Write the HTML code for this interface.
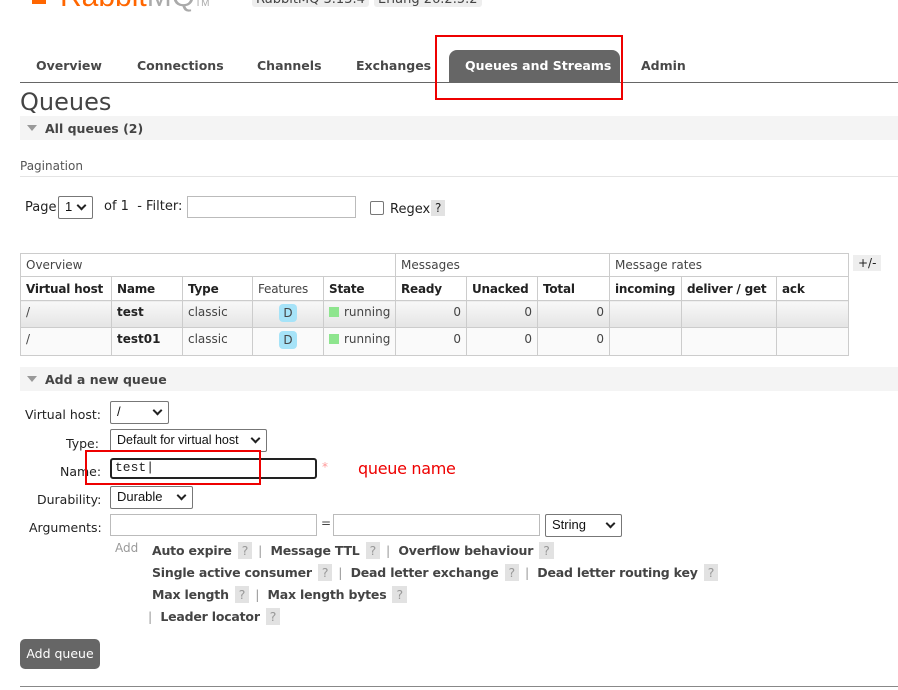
<!DOCTYPE html><html><head><style>
body{margin:0;width:898px;height:690px;background:#fff;position:relative;overflow:hidden;font-family:"DejaVu Sans","Liberation Sans",sans-serif;font-size:12px;color:#444}
.a{position:absolute;white-space:nowrap}
.b{font-weight:bold}
.tab{position:absolute;top:58px;font-weight:bold;font-size:12.5px;color:#484848}
.sec{position:absolute;left:20px;width:878px;height:24px;background:#f4f4f4}
.tri{position:absolute;left:7px;top:9px;width:0;height:0;border-left:5px solid transparent;border-right:5px solid transparent;border-top:6px solid #999}
table{position:absolute;left:20px;top:253px;border-collapse:collapse;font-size:12px;table-layout:fixed;width:828px}
td{border:1px solid #ccc;padding:0 5px;height:23px;color:#444;white-space:nowrap;overflow:hidden;box-sizing:border-box}
.h td{font-weight:bold;color:#222;font-size:12px;letter-spacing:-0.2px;height:24px}
.r1 td{background:linear-gradient(#f8f8f8,#e4e4e4);height:27px;vertical-align:top;padding-top:4px}
.r2 td{background:#fafafa;height:28px;vertical-align:top;padding-top:4px}
.n{text-align:right}
.q{display:inline-block;background:#e2e2e2;color:#999;padding:1px 4px;font-weight:normal;margin:0 6px}
.sel{position:absolute;border:1px solid #777;border-radius:2px;background:#fff;font-size:13px;color:#111;padding-left:6px;box-sizing:border-box;line-height:20px;overflow:hidden;white-space:nowrap;font-family:"Liberation Sans",sans-serif}
.sel:after{content:"";position:absolute;right:7px;top:5px;width:5px;height:5px;border-right:2px solid #222;border-bottom:2px solid #222;transform:rotate(45deg)}
.inp{position:absolute;border:1px solid #bbb;background:#fff;box-sizing:border-box}
.D{display:inline-block;background:#a6e3f8;border-radius:4px;padding:2px 4px;color:#444;margin-top:2px}
.g{display:inline-block;width:10px;height:10px;background:#8ee58e;margin-right:5px;vertical-align:-1px}
.lk{position:absolute;font-weight:bold;color:#444;font-size:12.5px;letter-spacing:-0.2px}
</style></head><body>
<div class="a" style="left:32px;top:-12px;width:14px;height:16px;background:#f60"></div>
<div class="a" style="left:60px;top:-20px;font-size:30px;color:#f60;font-family:'Liberation Sans',sans-serif">Rabbit<span style="color:#aaa">MQ</span><span style="font-size:10px;color:#aaa">TM</span></div>
<div class="a" style="left:252px;top:-8px;background:#eee;padding:0 4px;border-radius:3px;font-size:13px">RabbitMQ 3.13.4</div>
<div class="a" style="left:374px;top:-8px;background:#eee;padding:0 4px;border-radius:3px;font-size:13px">Erlang 26.2.5.2</div>
<div class="tab" style="left:36px">Overview</div>
<div class="tab" style="left:137px">Connections</div>
<div class="tab" style="left:257px">Channels</div>
<div class="tab" style="left:356px">Exchanges</div>
<div class="a" style="left:449px;top:50px;width:171px;height:32px;background:#666;border-radius:8px 8px 0 0"></div>
<div class="tab" style="left:465px;color:#fff">Queues and Streams</div>
<div class="tab" style="left:641px">Admin</div>
<div class="a" style="left:20px;top:82px;width:878px;height:1px;background:#666"></div>
<div class="a" style="left:435px;top:35px;width:188px;height:65px;border:2px solid #e00;box-sizing:border-box"></div>
<div class="a" style="left:20px;top:88px;font-size:24px;color:#444">Queues</div>
<div class="sec" style="top:116px"><div class="tri"></div><div class="a b" style="left:25px;top:5px;font-size:12.5px">All queues (2)</div></div>
<div class="a" style="left:20px;top:159px;color:#555">Pagination</div>
<div class="a" style="left:20px;top:176px;width:878px;height:1px;background:#e4e4e4"></div>
<div class="a" style="left:25px;top:200px;font-size:13px;color:#222">Page</div>
<div class="sel" style="left:58px;top:196px;width:35px;height:23px">1</div>
<div class="a" style="left:104px;top:199px;font-size:13px;color:#222">of 1 &nbsp;- Filter:</div>
<div class="inp" style="left:187px;top:196px;width:169px;height:22px"></div>
<div class="a" style="left:370px;top:201px;width:12px;height:12px;border:1px solid #777;border-radius:2px"></div>
<div class="a" style="left:390px;top:202px;font-size:13px;color:#222">Regex</div>
<div class="a" style="left:431px;top:200px;background:#e2e2e2;padding:1px 4px;font-size:12px;color:#222">?</div>
<table>
<colgroup><col style="width:91px"><col style="width:71px"><col style="width:70px"><col style="width:71px"><col style="width:72px"><col style="width:71px"><col style="width:71px"><col style="width:72px"><col style="width:72px"><col style="width:95px"><col style="width:72px"></colgroup>
<tr><td colspan="5">Overview</td><td colspan="3">Messages</td><td colspan="3">Message rates</td></tr>
<tr class="h"><td>Virtual host</td><td>Name</td><td>Type</td><td style="font-weight:normal;color:#444">Features</td><td>State</td><td>Ready</td><td>Unacked</td><td>Total</td><td>incoming</td><td>deliver / get</td><td>ack</td></tr>
<tr class="r1"><td>/</td><td class="b" style="color:#222">test</td><td>classic</td><td style="text-align:center;padding-top:1px"><span class="D">D</span></td><td><span class="g"></span>running</td><td class="n">0</td><td class="n">0</td><td class="n">0</td><td></td><td></td><td></td></tr>
<tr class="r2"><td>/</td><td class="b" style="color:#222">test01</td><td>classic</td><td style="text-align:center;padding-top:1px"><span class="D">D</span></td><td><span class="g"></span>running</td><td class="n">0</td><td class="n">0</td><td class="n">0</td><td></td><td></td><td></td></tr>
</table>
<div class="a" style="left:853px;top:255px;background:#eee;padding:1px 5px;color:#222">+/-</div>
<div class="sec" style="top:367px"><div class="tri"></div><div class="a b" style="left:25px;top:5px;font-size:12.5px">Add a new queue</div></div>
<div class="a" style="left:25px;top:407px;color:#222;font-size:12.5px">Virtual host:</div>
<div class="sel" style="left:110px;top:401px;width:59px;height:23px">/</div>
<div class="a" style="left:66px;top:436px;color:#222;font-size:12.5px">Type:</div>
<div class="sel" style="left:110px;top:429px;width:157px;height:23px;font-size:12.5px">Default for virtual host</div>
<div class="a" style="left:60px;top:464px;color:#222;font-size:12.5px">Name:</div>
<div class="a" style="left:110px;top:458px;width:207px;height:21px;border:2px solid #222;border-radius:3px;box-sizing:border-box;font-family:'Liberation Mono',monospace;font-size:13px;color:#222;padding-left:3px;line-height:16px">test|</div>
<div class="a" style="left:85px;top:450px;width:176px;height:35px;border:2px solid #e00;box-sizing:border-box"></div>
<div class="a" style="left:322px;top:460px;color:#f99">*</div>
<div class="a" style="left:358px;top:459px;color:#e00;font-size:16px;font-family:'DejaVu Sans',sans-serif;letter-spacing:-0.3px">queue name</div>
<div class="a" style="left:37px;top:492px;color:#222;font-size:12.5px">Durability:</div>
<div class="sel" style="left:110px;top:486px;width:83px;height:23px">Durable</div>
<div class="a" style="left:29px;top:520px;color:#222;font-size:12.5px">Arguments:</div>
<div class="inp" style="left:110px;top:514px;width:207px;height:22px"></div>
<div class="a" style="left:321px;top:516px;color:#444">=</div>
<div class="inp" style="left:333px;top:514px;width:207px;height:22px"></div>
<div class="sel" style="left:545px;top:514px;width:77px;height:23px">String</div>
<div class="a" style="left:115px;top:541px;color:#999">Add</div>
<div class="lk" style="left:152px;top:542px">Auto expire<span class="q">?</span><span style="font-weight:normal;color:#999">|</span> &nbsp;Message TTL<span class="q">?</span><span style="font-weight:normal;color:#999">|</span> &nbsp;Overflow behaviour<span class="q">?</span></div>
<div class="lk" style="left:152px;top:564px">Single active consumer<span class="q">?</span><span style="font-weight:normal;color:#999">|</span> &nbsp;Dead letter exchange<span class="q">?</span><span style="font-weight:normal;color:#999">|</span> &nbsp;Dead letter routing key<span class="q">?</span></div>
<div class="lk" style="left:152px;top:586px">Max length<span class="q">?</span><span style="font-weight:normal;color:#999">|</span> &nbsp;Max length bytes<span class="q">?</span></div>
<div class="lk" style="left:148px;top:608px"><span style="font-weight:normal;color:#999">|</span> &nbsp;Leader locator<span class="q">?</span></div>
<div class="a" style="left:20px;top:639px;width:80px;height:30px;background:#666;border-radius:5px;color:#fff;font-size:12.5px;line-height:30px;text-align:center">Add queue</div>
<div class="a" style="left:20px;top:686px;width:878px;height:1px;background:#888"></div>
</body></html>
